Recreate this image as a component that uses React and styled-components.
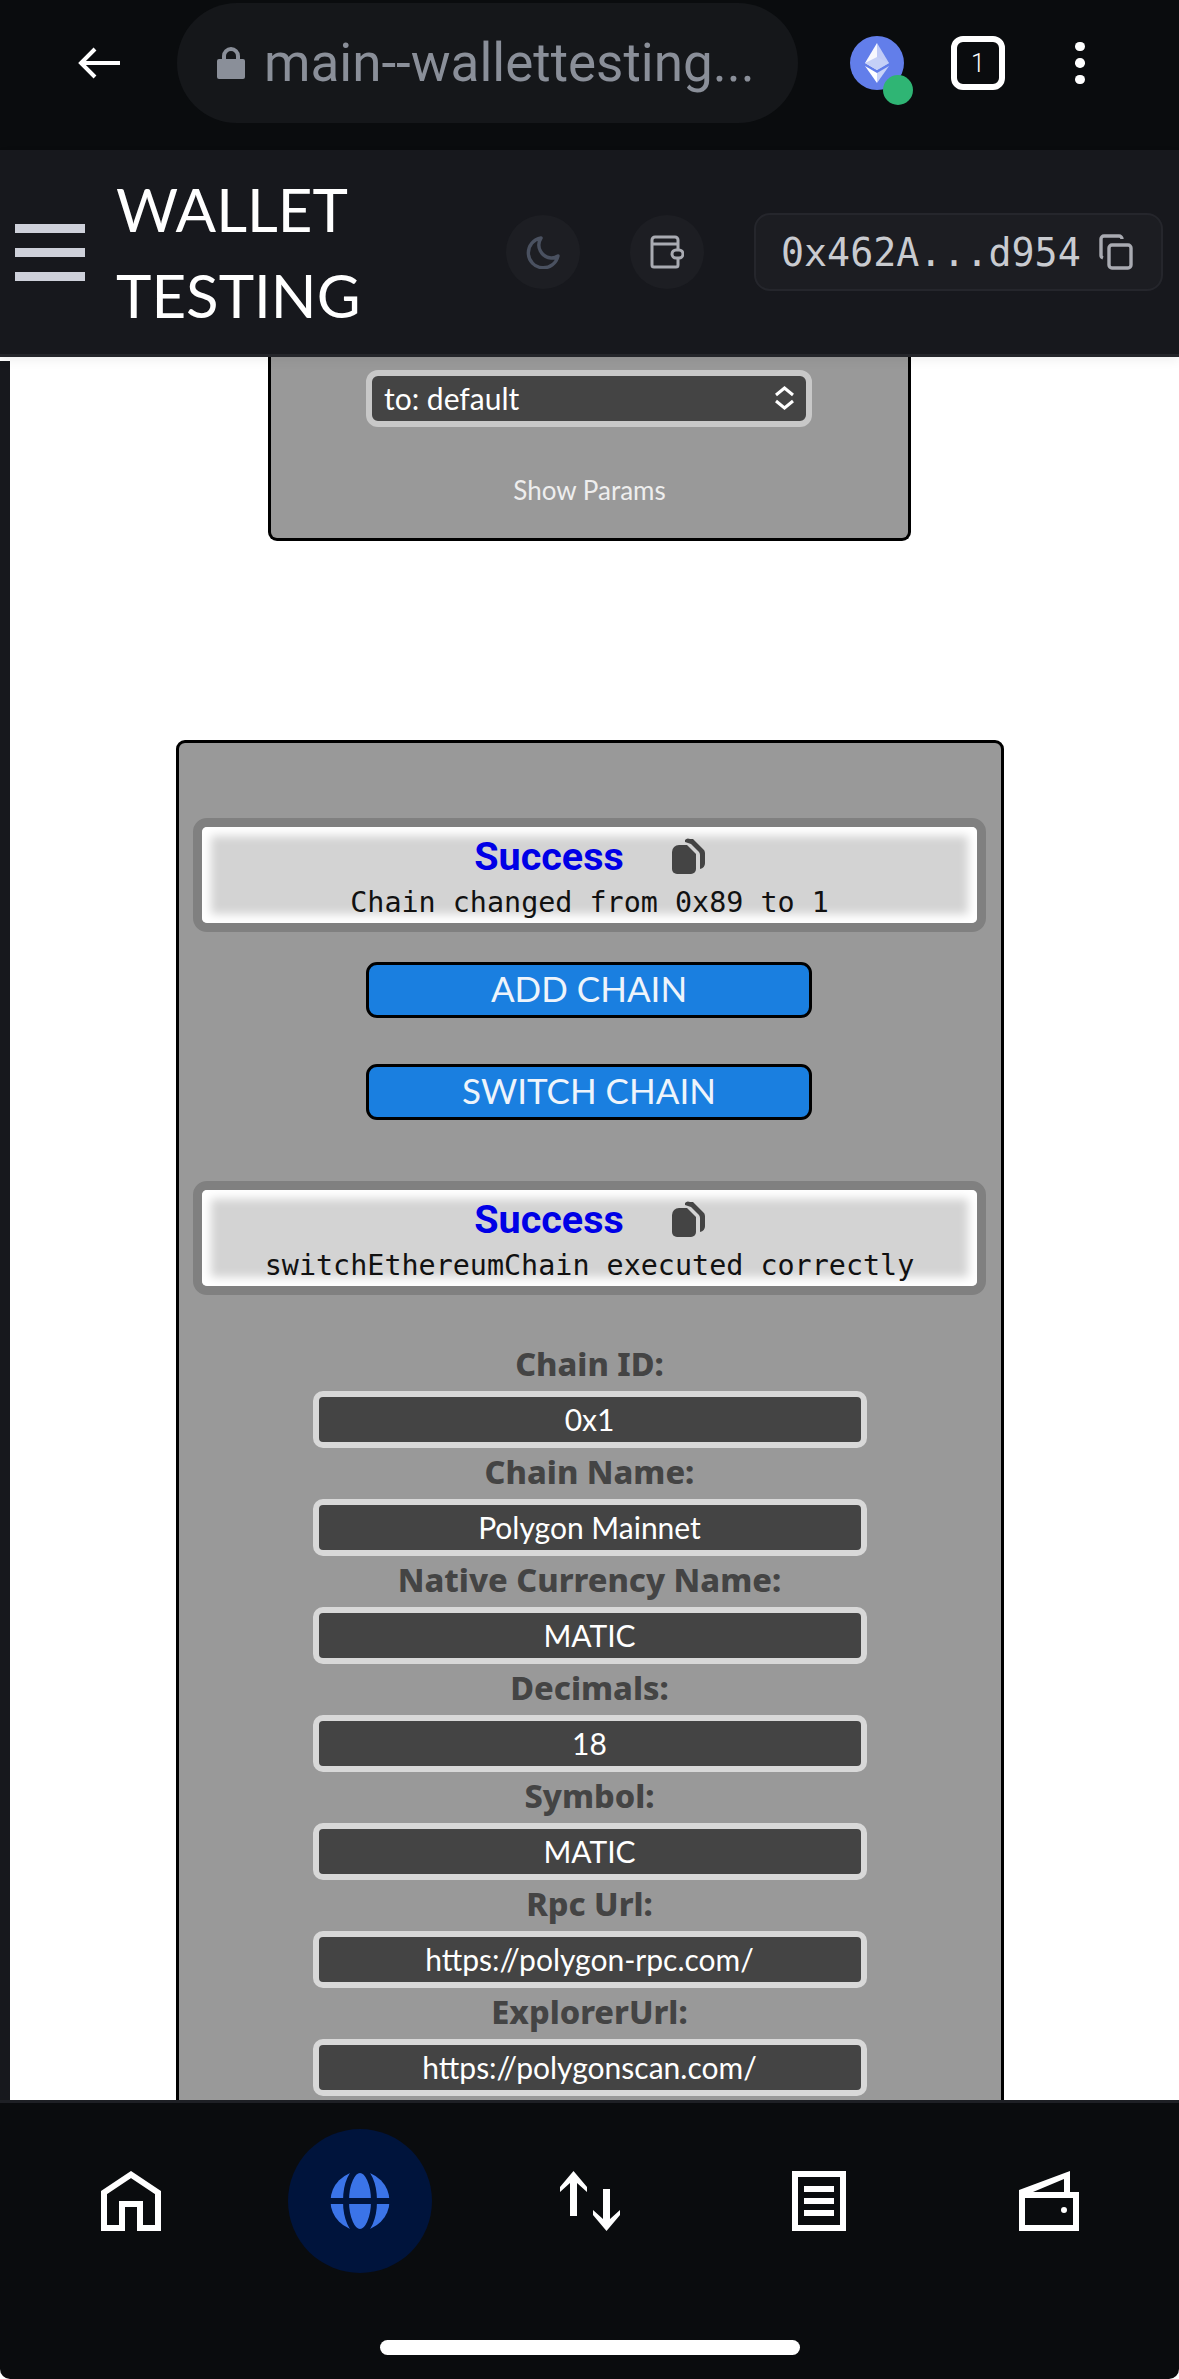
import React from 'react';
import styled, { createGlobalStyle } from 'styled-components';

const ROUND = '"Lato", "Noto Sans", sans-serif';
const MONO = '"DejaVu Sans Mono", "Liberation Mono", monospace';

const chainFields = [
  { label: 'Chain ID:', value: '0x1' },
  { label: 'Chain Name:', value: 'Polygon Mainnet' },
  { label: 'Native Currency Name:', value: 'MATIC' },
  { label: 'Decimals:', value: '18' },
  { label: 'Symbol:', value: 'MATIC' },
  { label: 'Rpc Url:', value: 'https://polygon-rpc.com/' },
  { label: 'ExplorerUrl:', value: 'https://polygonscan.com/' },
];

const Alert = ({ text }) => (
  <AlertBox>
    <AlertInner>
      <AlertHead>
        <AlertTitle>Success</AlertTitle>
        <svg width="34" height="36" viewBox="0 0 34 36">
          <path d="M8 7h8l9 9v15a5 5 0 0 1-5 5H6a5 5 0 0 1-5-5V14a7 7 0 0 1 7-7z" fill="#444" />
          <path d="M14 2a4 4 0 0 1 5-1l3 0 10 10a5 5 0 0 1 2 4v10a6 6 0 0 1-5 6V17a5 5 0 0 0-1-3l-8-8-6-2z" fill="#444" />
        </svg>
      </AlertHead>
      <AlertText>{text}</AlertText>
    </AlertInner>
  </AlertBox>
);

const App = () => {
  return (
    <>
      <GlobalStyle />
      <Screen>
        <BrowserBar>
          <svg width="42" height="32" viewBox="0 0 42 32" fill="none" stroke="#fff" strokeWidth="4">
            <path d="M42 16H4M17 2L3 16l14 14" />
          </svg>
          <UrlPill>
            <svg width="30" height="32" viewBox="0 0 30 32">
              <path d="M8 13V9a7 7 0 0 1 14 0v4" fill="none" stroke="#8a8f99" strokeWidth="4" />
              <rect x="1" y="12" width="28" height="20" rx="2" fill="#8a8f99" />
            </svg>
            <UrlText>main--wallettesting...</UrlText>
          </UrlPill>
          <EthBadge>
            <svg width="54" height="54" viewBox="0 0 54 54">
              <circle cx="27" cy="27" r="27" fill="#627eea" />
              <path d="M27 7L15 27l12 7z" fill="#fff" opacity="0.95" />
              <path d="M27 7l12 20-12 7z" fill="#fff" opacity="0.6" />
              <path d="M15 27l12-6 12 6-12 7z" fill="#c5d0f7" />
              <path d="M15 30l12 7v10z" fill="#fff" />
              <path d="M39 30l-12 7v10z" fill="#fff" opacity="0.65" />
            </svg>
            <GreenDot />
          </EthBadge>
          <TabCount>1</TabCount>
          <MenuDots>
            <i />
            <i />
            <i />
          </MenuDots>
        </BrowserBar>

        <AppHeader>
          <Burger>
            <i />
            <i />
            <i />
          </Burger>
          <Title>
            WALLET
            <br />
            TESTING
          </Title>
          <HeaderActions>
            <RoundAction>
              <svg width="34" height="34" viewBox="0 0 34 34" fill="none" stroke="#4a5160" strokeWidth="3.4">
                <path d="M15 3a15 15 0 1 0 17 18 11 11 0 0 1-7 2A13 13 0 0 1 15 3z" strokeLinejoin="round" />
              </svg>
            </RoundAction>
            <RoundAction>
              <svg width="34" height="34" viewBox="0 0 34 34" fill="none" stroke="#a9abb2" strokeWidth="3">
                <path d="M28 15V5a3 3 0 0 0-3-3H5a3 3 0 0 0-3 3v25a2 2 0 0 0 2 2h22a2 2 0 0 0 2-2v-6" />
                <path d="M2 9h26" />
                <rect x="22" y="15" width="11" height="8" rx="4" />
              </svg>
            </RoundAction>
            <AddressBox>
              <AddressText>0x462A...d954</AddressText>
              <svg width="34" height="36" viewBox="0 0 34 36" fill="none" stroke="#a9abb2" strokeWidth="3.4">
                <rect x="10" y="11" width="22" height="23" rx="3" />
                <path d="M4 24a3 3 0 0 1-2-3V5a3 3 0 0 1 3-3h15a3 3 0 0 1 3 3" />
              </svg>
            </AddressBox>
          </HeaderActions>
        </AppHeader>

        <Page>
          <TopCard>
            <SelectBox>
              <span>to: default</span>
              <svg width="21" height="24" viewBox="0 0 21 24" fill="none" stroke="#fff" strokeWidth="3">
                <path d="M2 9l8.500-7L19 9M2 15l8.500 7L19 15" />
              </svg>
            </SelectBox>
            <ShowParams>Show Params</ShowParams>
          </TopCard>

          <ChainCard>
            <Alert text="Chain changed from 0x89 to 1" />
            <ChainButton>ADD CHAIN</ChainButton>
            <ChainButton>SWITCH CHAIN</ChainButton>
            <Alert text="switchEthereumChain executed correctly" />
            <Fields>
              {chainFields.map((field) => (
                <React.Fragment key={field.label}>
                  <FieldLabel>{field.label}</FieldLabel>
                  <FieldValue>{field.value}</FieldValue>
                </React.Fragment>
              ))}
            </Fields>
          </ChainCard>
        </Page>

        <BottomNav>
          <NavRow>
            <NavItem>
              <svg width="60" height="60" viewBox="0 0 60 60" fill="none" stroke="#fff" strokeWidth="6">
                <path d="M3 57V21.6L30 3.6l27 18V57H39V33H21v24z" />
              </svg>
            </NavItem>
            <NavItem $active>
              <svg width="60" height="60" viewBox="0 0 60 60">
                <circle cx="30" cy="30" r="29.5" fill="#3b74e8" />
                <ellipse cx="30" cy="30" rx="14" ry="31" fill="none" stroke="#00143c" strokeWidth="6" />
                <path d="M0 30h60" stroke="#00143c" strokeWidth="6" />
              </svg>
            </NavItem>
            <NavItem>
              <svg width="60" height="60" viewBox="0 0 60 60" fill="#fff">
                <path d="M13.5 0L27 16v5l-10-9v33h-7V12L0 21v-5z" />
                <path d="M46.5 60L33 44v-5l10 9V18h7v30l10-9v5z" />
              </svg>
            </NavItem>
            <NavItem>
              <svg width="54" height="60" viewBox="0 0 54 60" fill="none" stroke="#fff" strokeWidth="6">
                <rect x="3" y="3" width="48" height="54" />
                <path d="M12 18h30M12 30h30M12 42h30" />
              </svg>
            </NavItem>
            <NavItem>
              <svg width="60" height="60" viewBox="0 0 60 60" fill="#fff">
                <path d="M0 19L51 0v21h-6V8L14 21H0z" />
                <path fillRule="evenodd" d="M0 21h60v39H0zM6 27v27h48V27z" />
                <circle cx="45" cy="39" r="3" />
              </svg>
            </NavItem>
          </NavRow>
          <HomePill />
        </BottomNav>
      </Screen>
    </>
  );
};

const GlobalStyle = createGlobalStyle`
  html, body {
    margin: 0;
    padding: 0;
    background: #fff;
  }
`;

const Screen = styled.div`
  width: 1179px;
  height: 2379px;
  display: flex;
  flex-direction: column;
  overflow: hidden;
  font-family: ${ROUND};
`;

const BrowserBar = styled.div`
  height: 150px;
  box-sizing: border-box;
  flex-shrink: 0;
  display: flex;
  align-items: center;
  padding: 0 0 24px 78px;
  background: #0a0c0e;
`;

const UrlPill = styled.div`
  width: 621px;
  height: 120px;
  margin-left: 57px;
  box-sizing: border-box;
  padding-left: 39px;
  display: flex;
  align-items: center;
  gap: 18px;
  border-radius: 60px;
  background: #15171a;
`;

const UrlText = styled.span`
  font-family: 'Roboto', sans-serif;
  font-size: 53px;
  color: #8a8f99;
  white-space: nowrap;
`;

const EthBadge = styled.div`
  position: relative;
  width: 54px;
  height: 54px;
  margin-left: 52px;
  svg {
    display: block;
  }
`;

const GreenDot = styled.span`
  position: absolute;
  right: -9px;
  bottom: -15px;
  width: 30px;
  height: 30px;
  border-radius: 50%;
  background: #2fb574;
`;

const TabCount = styled.div`
  width: 54px;
  height: 54px;
  margin-left: 47px;
  box-sizing: border-box;
  display: flex;
  align-items: center;
  justify-content: center;
  border: 6px solid #fff;
  border-radius: 12px;
  font-family: 'Roboto', sans-serif;
  font-size: 25px;
  font-weight: 300;
  color: #fff;
`;

const MenuDots = styled.div`
  margin-left: 70px;
  display: flex;
  flex-direction: column;
  gap: 7px;
  i {
    width: 9.5px;
    height: 9.5px;
    border-radius: 50%;
    background: #fff;
  }
`;

const AppHeader = styled.header`
  position: relative;
  z-index: 1;
  height: 207px;
  box-sizing: border-box;
  flex-shrink: 0;
  display: flex;
  align-items: center;
  padding: 0 16px 0 15px;
  background: #17181d;
  border-bottom: 3px solid #24252a;
  box-shadow: 0 4px 10px rgba(0, 0, 0, 0.06);
`;

const Burger = styled.div`
  width: 70px;
  display: flex;
  flex-direction: column;
  gap: 15px;
  i {
    height: 9px;
    background: #ced0da;
  }
`;

const Title = styled.div`
  margin-left: 31px;
  font-size: 60px;
  font-weight: 400;
  line-height: 86px;
  color: #fff;
`;

const HeaderActions = styled.div`
  margin-left: auto;
  display: flex;
  align-items: center;
  gap: 50px;
`;

const RoundAction = styled.div`
  width: 74px;
  height: 74px;
  display: flex;
  align-items: center;
  justify-content: center;
  border-radius: 50%;
  background: #1d1e23;
`;

const AddressBox = styled.div`
  width: 409px;
  height: 78px;
  box-sizing: border-box;
  padding: 0 28px 0 25px;
  display: flex;
  align-items: center;
  justify-content: space-between;
  border: 2px solid #25262c;
  border-radius: 16px;
  background: #1c1d22;
`;

const AddressText = styled.span`
  font-family: ${MONO};
  font-size: 38.3px;
  color: #c9cbd0;
  white-space: nowrap;
`;

const Page = styled.main`
  position: relative;
  flex: 1;
  min-height: 0;
  overflow: hidden;
  background: #fff;
  &::before {
    content: '';
    position: absolute;
    left: 0;
    top: 4px;
    bottom: 0;
    width: 10px;
    background: #17181d;
  }
`;

const TopCard = styled.section`
  width: 643px;
  height: 184px;
  box-sizing: border-box;
  margin: 0 auto;
  padding-top: 13px;
  display: flex;
  flex-direction: column;
  align-items: center;
  background: #999;
  border: 3px solid #000;
  border-top: 0;
  border-radius: 0 0 9px 9px;
`;

const SelectBox = styled.div`
  width: 446px;
  height: 57px;
  margin-right: 1px;
  box-sizing: border-box;
  padding: 0 11px 2px 12px;
  display: flex;
  align-items: center;
  justify-content: space-between;
  background: #444;
  border: 6px solid #c8c8c8;
  border-radius: 12px;
  font-size: 30px;
  color: #fff;
`;

const ShowParams = styled.div`
  margin-top: 47px;
  font-size: 26px;
  color: #eee;
`;

const ChainCard = styled.section`
  width: 828px;
  box-sizing: border-box;
  margin: 199px auto 0;
  padding: 75px 15px 60px;
  display: flex;
  flex-direction: column;
  align-items: center;
  background: #999;
  border: 3px solid #000;
  border-radius: 9px;
`;

const AlertBox = styled.div`
  width: 793px;
  height: 114px;
  flex-shrink: 0;
  box-sizing: border-box;
  border: 9px solid #808080;
  border-radius: 14px;
`;

const AlertInner = styled.div`
  height: 100%;
  box-sizing: border-box;
  padding-top: 7px;
  display: flex;
  flex-direction: column;
  align-items: center;
  background: #d3d3d3;
  border-radius: 5px;
  box-shadow: inset 0 0 10px 9px #fff;
`;

const AlertHead = styled.div`
  display: flex;
  align-items: center;
  gap: 47px;
  height: 44px;
`;

const AlertTitle = styled.span`
  font-family: 'Roboto', sans-serif;
  font-size: 39.5px;
  font-weight: 700;
  color: #0000e6;
`;

const AlertText = styled.div`
  margin-top: 7px;
  font-family: ${MONO};
  font-size: 28.4px;
  line-height: 36px;
  color: #111;
  white-space: nowrap;
`;

const ChainButton = styled.button`
  width: 446px;
  height: 56px;
  flex-shrink: 0;
  margin-right: 1px;
  padding: 0 0 4px;
  background: #1a7fe0;
  border: 3px solid #000;
  border-radius: 11px;
  font-family: ${ROUND};
  font-size: 35px;
  color: #eef4fb;
  margin-top: 30px;
  & + & {
    margin-top: 46px;
  }
  & + ${AlertBox} {
    margin-top: 61px;
  }
`;

const Fields = styled.div`
  margin-top: 45px;
  display: flex;
  flex-direction: column;
  align-items: center;
`;

const FieldLabel = styled.div`
  height: 51px;
  line-height: 48px;
  font-family: 'Noto Sans', sans-serif;
  font-size: 32.5px;
  font-weight: 800;
  color: #444;
  white-space: nowrap;
`;

const FieldValue = styled.div`
  width: 554px;
  height: 57px;
  box-sizing: border-box;
  padding-bottom: 2px;
  display: flex;
  align-items: center;
  justify-content: center;
  background: #444;
  border: 6px solid #d8d8d8;
  border-radius: 10px;
  font-size: 30px;
  color: #fff;
`;

const BottomNav = styled.nav`
  height: 279px;
  box-sizing: border-box;
  flex-shrink: 0;
  padding-top: 26px;
  background: #0a0c0e;
  border-top: 3px solid #1e2025;
  border-radius: 0 0 10px 10px;
`;

const NavRow = styled.div`
  display: grid;
  grid-template-columns: repeat(5, 229.5px);
  padding-left: 16px;
`;

const NavItem = styled.div`
  width: 144px;
  height: 144px;
  justify-self: center;
  display: flex;
  align-items: center;
  justify-content: center;
  border-radius: 50%;
  background: ${(p) => (p.$active ? '#00143c' : 'transparent')};
`;

const HomePill = styled.div`
  width: 420px;
  height: 15px;
  margin: 67px auto 0;
  border-radius: 8px;
  background: #fff;
`;

export default App;
